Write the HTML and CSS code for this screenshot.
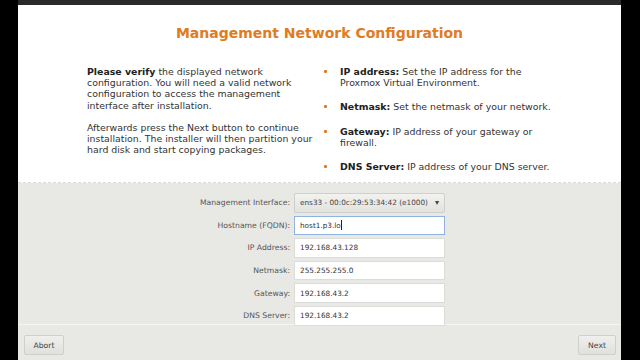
FILE: index.html
```html
<!DOCTYPE html>
<html lang="en">
  <head>
    <meta charset="UTF-8" />
    <title>Management Network Configuration</title>
    <link rel="stylesheet" href="styles.css">
  </head>
  <body>
    <div class="screen">
      <div class="panel">
        <div class="top-band"></div>

        <div class="intro">
          <h1>Management Network Configuration</h1>
          <div class="columns">
            <div class="info">
              <p><strong>Please verify</strong> the displayed network configuration. You will need a valid network configuration to access the management interface after installation.</p>
              <p>Afterwards press the Next button to continue installation. The installer will then partition your hard disk and start copying packages.</p>
            </div>
            <ul class="hints">
              <li><strong>IP address:</strong> Set the IP address for the Proxmox Virtual Environment.</li>
              <li><strong>Netmask:</strong> Set the netmask of your network.</li>
              <li><strong>Gateway:</strong> IP address of your gateway or firewall.</li>
              <li class="last"><strong>DNS Server:</strong> IP address of your DNS server.</li>
            </ul>
          </div>
        </div>

        <div class="form-area">
          <div class="form">
            <label>Management Interface:</label>
            <div class="select"><span>ens33 - 00:0c:29:53:34:42 (e1000)</span><span class="arrow">&#9662;</span></div>
            <label>Hostname (FQDN):</label>
            <div class="field focused">host1.p3.lo<span class="caret"></span></div>
            <label>IP Address:</label>
            <div class="field">192.168.43.128</div>
            <label>Netmask:</label>
            <div class="field">255.255.255.0</div>
            <label>Gateway:</label>
            <div class="field">192.168.43.2</div>
            <label>DNS Server:</label>
            <div class="field">192.168.43.2</div>
          </div>
        </div>

        <div class="buttons">
          <button class="btn">Abort</button>
          <button class="btn next">Next</button>
        </div>
      </div>
    </div>
  </body>
</html>
```

FILE: styles.css
```css
body {
  margin: 0;
  background-color: #000;
  font-family: "DejaVu Sans", sans-serif;
  color: #333;
}

.screen {
  display: flex;
  height: 360px;
  padding-left: 18px;
  overflow: hidden;
}

.panel {
  width: 603px;
  display: flex;
  flex-direction: column;
  background-color: #e8e8e4;
}

.top-band {
  height: 5px;
  background-color: #2a2a2a;
}

.intro {
  height: 178px;
  background-color: #fff;
  border-bottom: 1px dashed #dcdcd8;
  box-sizing: border-box;
}

h1 {
  margin: 20px 0 0;
  font-size: 14px;
  line-height: 17px;
  color: #e07b1f;
  text-align: center;
}

.columns {
  display: flex;
  margin-top: 24px;
  padding-left: 69px;
  font-size: 9.4px;
  line-height: 11.2px;
}

.info {
  width: 226px;
}

.info p {
  margin: 0 0 11px;
}

.info strong,
.hints strong {
  color: #222;
}

.hints {
  list-style: none;
  margin: 0 0 0 10px;
  padding: 0;
  width: 238px;
}

.hints li {
  position: relative;
  padding-left: 17px;
  margin-bottom: 13px;
}

.hints li.last {
  margin-top: 1px;
}

.hints li::before {
  content: "";
  position: absolute;
  left: 1px;
  top: 4px;
  width: 3px;
  height: 3px;
  border-radius: 1px;
  background-color: #e0781e;
}

.form-area {
  height: 142px;
  border-bottom: 1px solid #f4f4f2;
  box-sizing: border-box;
  padding-top: 10px;
}

.form {
  display: grid;
  grid-template-columns: 272px 151px;
  column-gap: 4px;
  row-gap: 3px;
  grid-auto-rows: 19.6px;
  font-size: 7.7px;
}

.form label {
  justify-self: end;
  align-self: center;
  color: #555;
}

.field,
.select {
  box-sizing: border-box;
  display: flex;
  align-items: center;
  padding-left: 5px;
  font-size: 7.3px;
  white-space: nowrap;
  color: #333;
}

.field {
  background-color: #fff;
  border: 1px solid #dcdcd8;
}

.field.focused {
  border-color: #8fb3de;
}

.caret {
  display: inline-block;
  width: 1px;
  height: 10px;
  background-color: #222;
}

.select {
  justify-content: space-between;
  padding-right: 5px;
  border: 1px solid #cfcfcb;
  border-radius: 2px;
  background: linear-gradient(#f2f2f0, #e2e2df);
  color: #444;
}

.arrow {
  font-size: 8px;
}

.buttons {
  display: flex;
  justify-content: space-between;
  padding: 10px 5px 0 6px;
}

.btn {
  width: 40px;
  height: 20px;
  padding: 0;
  font-family: "DejaVu Sans", sans-serif;
  font-size: 7.7px;
  color: #444;
  background: linear-gradient(#efefed, #e0e0dc);
  border: 1px solid #cfcfcb;
  border-radius: 2px;
}

.btn.next {
  width: 38px;
}
```
